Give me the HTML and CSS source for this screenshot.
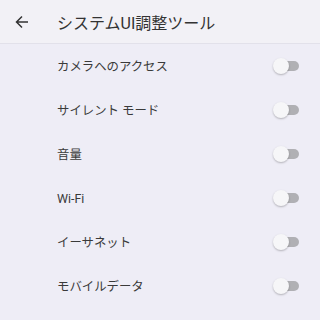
FILE: index.html
```html
<!DOCTYPE html>
<html lang="ja">
<head>
<meta charset="utf-8">
<link rel="stylesheet" href="styles.css">
</head>
<body>
<div class="app">
  <header class="bar">
    <span class="back">
      <svg width="16" height="16" viewBox="0 0 16 16"><path d="M14 8H2.5M8 2.5L2.5 8L8 13.5" fill="none" stroke="#333" stroke-width="1.5"/></svg>
    </span>
    <h1 class="title">システムUI調整ツール</h1>
  </header>
  <ul class="list">
    <li class="row"><span class="label">カメラへのアクセス</span><span class="toggle"><span class="track"></span><span class="thumb"></span></span></li>
    <li class="row"><span class="label">サイレント モード</span><span class="toggle"><span class="track"></span><span class="thumb"></span></span></li>
    <li class="row"><span class="label">音量</span><span class="toggle"><span class="track"></span><span class="thumb"></span></span></li>
    <li class="row"><span class="label">Wi-Fi</span><span class="toggle"><span class="track"></span><span class="thumb"></span></span></li>
    <li class="row"><span class="label">イーサネット</span><span class="toggle"><span class="track"></span><span class="thumb"></span></span></li>
    <li class="row"><span class="label">モバイルデータ</span><span class="toggle"><span class="track"></span><span class="thumb"></span></span></li>
  </ul>
</div>
</body>
</html>
```
FILE: styles.css
```css
* { box-sizing: border-box; }
html, body { margin: 0; padding: 0; }
body {
  width: 320px;
  height: 320px;
  overflow: hidden;
  background: #eeedf6;
  font-family: Roboto, "Noto Sans CJK JP", sans-serif;
  color: #333;
}
.bar {
  height: 44px;
  background: #f2f1f6;
  border-bottom: 1px solid #e2e1ea;
  display: flex;
  align-items: center;
}
.back {
  width: 16px;
  height: 16px;
  margin-left: 14px;
  display: flex;
}
.title {
  margin: 0 0 0 27px;
  font-size: 16px;
  font-weight: 400;
  color: #333;
}
.list {
  list-style: none;
  margin: 0;
  padding: 0;
}
.row {
  height: 44px;
  display: flex;
  align-items: center;
  justify-content: space-between;
  padding-left: 57px;
  padding-right: 21px;
}
.label {
  font-size: 12.4px;
  color: #3a3a3a;
}
.toggle {
  position: relative;
  width: 26px;
  height: 16px;
  display: block;
}
.track {
  position: absolute;
  left: 2px;
  top: 3px;
  width: 24px;
  height: 10px;
  border-radius: 5px;
  background: #b0b0b4;
}
.thumb {
  position: absolute;
  left: 0;
  top: 0;
  width: 16px;
  height: 16px;
  border-radius: 50%;
  background: #f6f6f8;
  box-shadow: 0 1px 2px rgba(0,0,0,0.25);
}
```
